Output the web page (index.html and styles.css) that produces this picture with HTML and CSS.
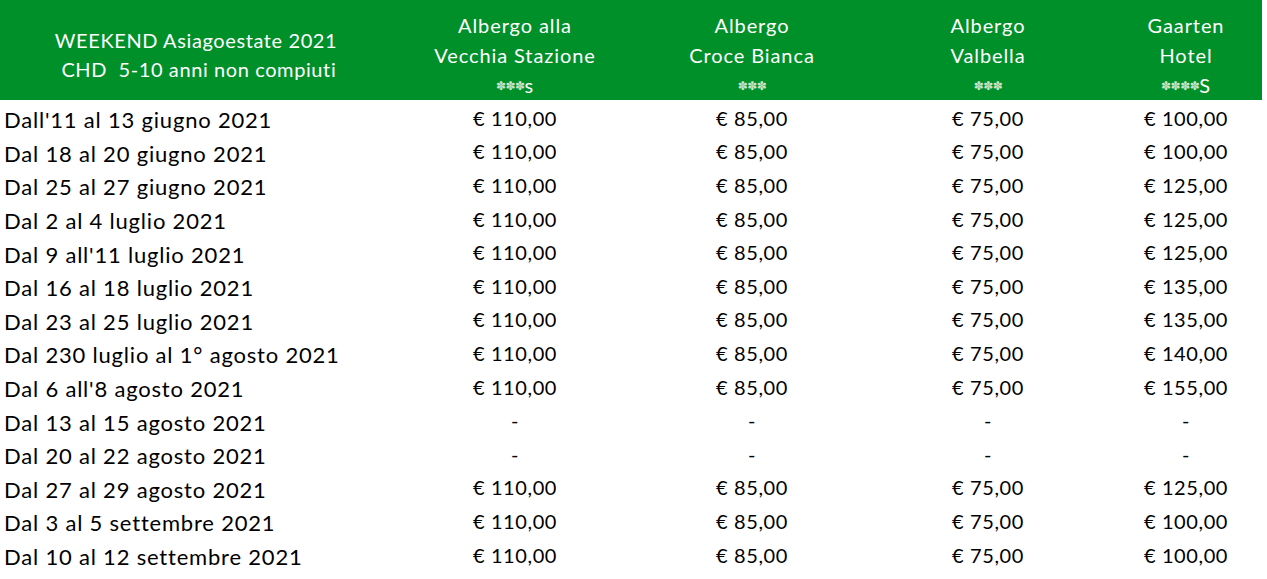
FILE: index.html
```html
<!DOCTYPE html>
<html lang="it">
<head>
<meta charset="utf-8">
<link rel="stylesheet" href="styles.css">
</head>
<body>
<div class="sheet">
  <div class="head">
    <div class="hcell first">WEEKEND Asiagoestate 2021<br>&nbsp;CHD&nbsp; 5-10 anni non compiuti</div>
    <div class="hcell">Albergo alla<br>Vecchia Stazione<br><span class="stars">✽✽✽</span>s</div>
    <div class="hcell">Albergo<br>Croce Bianca<br><span class="stars">✽✽✽</span></div>
    <div class="hcell">Albergo<br>Valbella<br><span class="stars">✽✽✽</span></div>
    <div class="hcell">Gaarten<br>Hotel<br><span class="stars">✽✽✽✽</span>S</div>
  </div>
  <div class="body">
    <div class="row"><div class="lab">Dall'11 al 13 giugno 2021</div><div class="p">€ 110,00</div><div class="p">€ 85,00</div><div class="p">€ 75,00</div><div class="p">€ 100,00</div></div>
    <div class="row"><div class="lab">Dal 18 al 20 giugno 2021</div><div class="p">€ 110,00</div><div class="p">€ 85,00</div><div class="p">€ 75,00</div><div class="p">€ 100,00</div></div>
    <div class="row"><div class="lab">Dal 25 al 27 giugno 2021</div><div class="p">€ 110,00</div><div class="p">€ 85,00</div><div class="p">€ 75,00</div><div class="p">€ 125,00</div></div>
    <div class="row"><div class="lab">Dal 2 al 4 luglio 2021</div><div class="p">€ 110,00</div><div class="p">€ 85,00</div><div class="p">€ 75,00</div><div class="p">€ 125,00</div></div>
    <div class="row"><div class="lab">Dal 9 all'11 luglio 2021</div><div class="p">€ 110,00</div><div class="p">€ 85,00</div><div class="p">€ 75,00</div><div class="p">€ 125,00</div></div>
    <div class="row"><div class="lab">Dal 16 al 18 luglio 2021</div><div class="p">€ 110,00</div><div class="p">€ 85,00</div><div class="p">€ 75,00</div><div class="p">€ 135,00</div></div>
    <div class="row"><div class="lab">Dal 23 al 25 luglio 2021</div><div class="p">€ 110,00</div><div class="p">€ 85,00</div><div class="p">€ 75,00</div><div class="p">€ 135,00</div></div>
    <div class="row"><div class="lab">Dal 230 luglio al 1° agosto 2021</div><div class="p">€ 110,00</div><div class="p">€ 85,00</div><div class="p">€ 75,00</div><div class="p">€ 140,00</div></div>
    <div class="row"><div class="lab">Dal 6 all'8 agosto 2021</div><div class="p">€ 110,00</div><div class="p">€ 85,00</div><div class="p">€ 75,00</div><div class="p">€ 155,00</div></div>
    <div class="row"><div class="lab">Dal 13 al 15 agosto 2021</div><div class="p">-</div><div class="p">-</div><div class="p">-</div><div class="p">-</div></div>
    <div class="row"><div class="lab">Dal 20 al 22 agosto 2021</div><div class="p">-</div><div class="p">-</div><div class="p">-</div><div class="p">-</div></div>
    <div class="row"><div class="lab">Dal 27 al 29 agosto 2021</div><div class="p">€ 110,00</div><div class="p">€ 85,00</div><div class="p">€ 75,00</div><div class="p">€ 125,00</div></div>
    <div class="row"><div class="lab">Dal 3 al 5 settembre 2021</div><div class="p">€ 110,00</div><div class="p">€ 85,00</div><div class="p">€ 75,00</div><div class="p">€ 100,00</div></div>
    <div class="row"><div class="lab">Dal 10 al 12 settembre 2021</div><div class="p">€ 110,00</div><div class="p">€ 85,00</div><div class="p">€ 75,00</div><div class="p">€ 100,00</div></div>
  </div>
</div>
</body>
</html>
```
FILE: styles.css
```css
html, body {
  margin: 0;
  padding: 0;
  background: #ffffff;
}
body {
  font-family: Lato, "Liberation Sans", sans-serif;
  color: #000;
  overflow: hidden;
}
.sheet {
  width: 1262px;
  background: linear-gradient(#00902a, #00902a) no-repeat;
  background-size: 1267px 24px;
}
.head, .row {
  display: grid;
  grid-template-columns: 392px 246px 228px 244px 152px;
}
.head {
  height: 100px;
  background: #00902a;
  color: #fff;
  font-size: 20px;
  letter-spacing: 0.9px;
}
.hcell {
  text-align: center;
  line-height: 30px;
  padding-top: 10px;
}
.hcell.first {
  padding-top: 26px;
  line-height: 29px;
  letter-spacing: 0.6px;
}
.stars {
  font-family: "DejaVu Sans", sans-serif;
  font-size: 12px;
  letter-spacing: -0.5px;
  vertical-align: 3px;
  color: #c9e4c9;
}
.body {
  padding-top: 3px;
}
.row {
  height: 33.6px;
  align-items: center;
}
.lab {
  font-size: 22px;
  padding-left: 4px;
  white-space: nowrap;
  letter-spacing: 0.8px;
}
.p {
  text-align: center;
  font-size: 20px;
  letter-spacing: 0.6px;
  padding-bottom: 4px;
}
```
